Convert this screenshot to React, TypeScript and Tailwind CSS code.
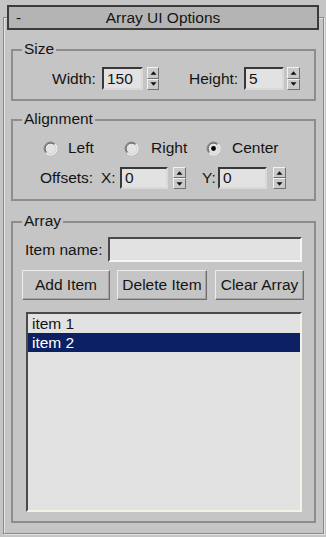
import React from 'react';

const font = { fontFamily: '"Liberation Sans", Arial, sans-serif' };

const Arrow = ({ up }: { up?: boolean }) => (
  <svg width="7" height="4" viewBox="0 0 7 4">
    <path d={up ? 'M0.5 3.8 L3.5 0.3 L6.5 3.8 Z' : 'M0.5 0.2 L3.5 3.7 L6.5 0.2 Z'} fill="#111" />
  </svg>
);

const Spinner = ({ className }: { className: string }) => (
  <div className={`flex flex-col ${className}`}>
    <div className="flex-1 flex items-center justify-center border border-t-[#f2f2f2] border-l-[#f2f2f2] border-b-[#707070] border-r-[#707070] bg-[#c9c9c9]">
      <Arrow up />
    </div>
    <div className="flex-1 flex items-center justify-center border border-t-[#f2f2f2] border-l-[#f2f2f2] border-b-[#707070] border-r-[#707070] bg-[#c9c9c9]">
      <Arrow />
    </div>
  </div>
);

const NumField = ({ value, className }: { value: string; className: string }) => (
  <div
    className={`flex items-center pl-[3px] bg-[#e2e2e2] border-2 border-t-[#383838] border-l-[#383838] border-b-[#d9d9d9] border-r-[#d9d9d9] leading-none ${className}`}
  >
    {value}
  </div>
);

const Radio = ({ checked }: { checked?: boolean }) => (
  <svg width="15" height="15" viewBox="0 0 15 15" className="shrink-0">
    <circle cx="7.5" cy="7.5" r="6.5" fill="#e3e3e3" />
    <path d="M2.9 12.1 A6.5 6.5 0 0 1 12.1 2.9" stroke="#8c8c8c" strokeWidth="1" fill="none" />
    <path d="M12.1 2.9 A6.5 6.5 0 0 1 2.9 12.1" stroke="#f4f4f4" strokeWidth="1" fill="none" />
    <path d="M3.61 11.39 A5.5 5.5 0 0 1 11.39 3.61" stroke="#3e3e3e" strokeWidth="1" fill="none" />
    <path d="M11.39 3.61 A5.5 5.5 0 0 1 3.61 11.39" stroke="#d2d2d2" strokeWidth="1" fill="none" />
    {checked && <circle cx="7.5" cy="7.5" r="2.4" fill="#000" />}
  </svg>
);

const Group = ({ title, className, children }: { title: string; className: string; children: React.ReactNode }) => (
  <div className={`relative ml-[7px] w-[305px] border-2 border-[#8d8d8d] ${className}`}>
    <span className="absolute -top-[11px] left-[9px] px-[2px] bg-[#c5c5c5] leading-[18px]">{title}</span>
    {children}
  </div>
);

const Button = ({ label, className }: { label: string; className: string }) => (
  <div
    className={`h-[30px] flex items-center justify-center border border-t-[#ececec] border-l-[#ececec] border-b-[#6e6e6e] border-r-[#6e6e6e] shadow-[inset_-1px_-1px_0_#a3a3a3] ${className}`}
  >
    {label}
  </div>
);

export default function App() {
  return (
    <div
      className="w-[326px] h-[537px] bg-[#c5c5c5] pt-[17px] pl-[3px] text-[#141414] text-[15.5px] overflow-hidden"
      style={font}
    >
      <div className="w-[321px] h-[517px] border border-[#8a8a8a] shadow-[1px_1px_0_#e4e4e4,inset_1px_1px_0_#e4e4e4] flex flex-col">
        {/* rollout title */}
        <div className="-mt-[13px] ml-[3px] w-[312px] h-[25px] border-2 border-[#3b3b3b] bg-[#b4b4b4] flex items-center">
          <span className="w-[20px] pl-[7px] leading-none">-</span>
          <span className="flex-1 text-center leading-none">Array UI Options</span>
          <span className="w-[20px]" />
        </div>

        <Group title="Size" className="mt-[19px] h-[52px]">
          <div className="pt-[16px] pl-[39px] flex items-center h-[39px]">
            <span className="w-[50px]">Width:</span>
            <NumField value="150" className="w-[41px] h-[23px]" />
            <Spinner className="ml-[4px] w-[12px] h-[23px]" />
            <span className="ml-[30px] w-[55px]">Height:</span>
            <NumField value="5" className="w-[40px] h-[23px]" />
            <Spinner className="ml-[3px] w-[13px] h-[23px]" />
          </div>
        </Group>

        <Group title="Alignment" className="mt-[18px] h-[82px]">
          <div className="pt-[19px] pl-[30px] flex items-center h-[35px]">
            <label className="w-[81px] flex items-center">
              <Radio />
              <span className="ml-[10px]">Left</span>
            </label>
            <label className="w-[82px] flex items-center">
              <Radio />
              <span className="ml-[12px]">Right</span>
            </label>
            <label className="flex items-center">
              <Radio checked />
              <span className="ml-[11px]">Center</span>
            </label>
          </div>
          <div className="mt-[11px] pl-[27px] flex items-center h-[22px]">
            <span className="w-[61px]">Offsets:</span>
            <span className="w-[19px]">X:</span>
            <NumField value="0" className="w-[48px] h-[22px]" />
            <Spinner className="ml-[5px] w-[13px] h-[22px]" />
            <span className="ml-[16px] w-[16px]">Y:</span>
            <NumField value="0" className="w-[49px] h-[22px]" />
            <Spinner className="ml-[6px] w-[13px] h-[22px]" />
          </div>
        </Group>

        <Group title="Array" className="mt-[20px] h-[302px]">
          <div className="pt-[14px] pl-[12px] flex items-center">
            <span className="w-[83px]">Item name:</span>
            <div className="w-[194px] h-[25px] bg-[#e2e2e2] border-2 border-t-[#4a4a4a] border-l-[#4a4a4a] border-b-[#f6f6f2] border-r-[#f6f6f2]" />
          </div>
          <div className="mt-[8px] pl-[9px] flex">
            <Button label="Add Item" className="w-[88px]" />
            <Button label="Delete Item" className="ml-[7px] w-[90px]" />
            <Button label="Clear Array" className="ml-[8px] w-[89px]" />
          </div>
          <div className="mt-[12px] ml-[13px] w-[276px] h-[200px] bg-[#e2e2e2] border-2 border-t-[#4a4a4a] border-l-[#4a4a4a] border-b-[#f4f1e8] border-r-[#f4f1e8] leading-[19px]">
            <div className="h-[19px] pl-[4px]">item 1</div>
            <div className="h-[19px] pl-[4px] bg-[#0b2164] text-white">item 2</div>
          </div>
        </Group>
      </div>
    </div>
  );
}
